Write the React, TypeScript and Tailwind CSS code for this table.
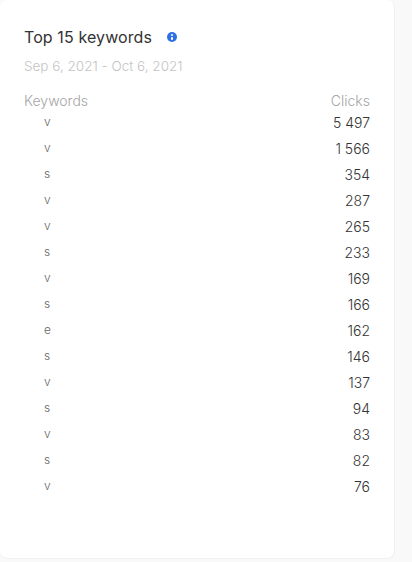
import React from "react";

const rows: [string, string][] = [
  ["v", "5 497"],
  ["v", "1 566"],
  ["s", "354"],
  ["v", "287"],
  ["v", "265"],
  ["s", "233"],
  ["v", "169"],
  ["s", "166"],
  ["e", "162"],
  ["s", "146"],
  ["v", "137"],
  ["s", "94"],
  ["v", "83"],
  ["s", "82"],
  ["v", "76"],
];

export default function App() {
  return (
    <div
      className="w-[412px] h-[562px] bg-[#f9f9f9]"
      style={{ fontFamily: "Inter, 'Open Sans', sans-serif" }}
    >
      <div className="w-[395px] h-[559px] bg-white rounded-lg pl-6 pr-[24px] pt-[27px] border border-[#f0f0f0] border-t-0 border-l-0">
        <div className="flex items-center h-[20px]">
          <span className="text-[16px] text-[#333] tracking-[0.1px]">Top 15 keywords</span>
          <span className="ml-[15px] w-[10px] h-[10px] rounded-full bg-[#2f6fe6] flex flex-col items-center justify-center gap-[1px]">
            <span className="w-[1.5px] h-[1.5px] bg-white rounded" />
            <span className="w-[1.5px] h-[3px] bg-white rounded" />
          </span>
        </div>
        <div className="mt-[9px] text-[13.5px] text-[#c4c4c4] font-light h-[20px] leading-[20px]">
          Sep 6, 2021 - Oct 6, 2021
        </div>
        <div className="mt-[15px] flex justify-between text-[14px] text-[#a5a5a5] font-light h-[20px] leading-[20px]">
          <span>Keywords</span>
          <span>Clicks</span>
        </div>
        <div className="flex flex-col mt-[-2px]">
          {rows.map(([k, v], i) => (
            <div key={i} className="flex justify-between items-center h-[26px]">
              <span className="pl-[20px] text-[12px] text-[#666] font-light">{k}</span>
              <span className="text-[14px] text-[#333] font-light">{v}</span>
            </div>
          ))}
        </div>
      </div>
    </div>
  );
}
